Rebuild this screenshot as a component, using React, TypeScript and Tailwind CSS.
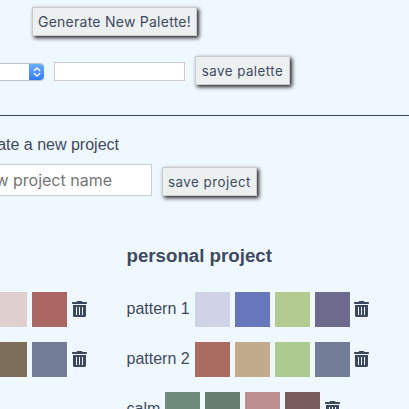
import React from "react";

const helvetica = "font-['Liberation_Sans',Arial,sans-serif]";

function ShadowButton({ children, className }: { children: React.ReactNode; className: string }) {
  return (
    <button
      className={`h-[29px] shrink-0 whitespace-nowrap border border-[#ccc] bg-[#ecf0f1] text-center font-['Inter',sans-serif] text-[#3e4a60] shadow-[2px_2px_4px_#222] ${className}`}
    >
      {children}
    </button>
  );
}

function Trash({ className }: { className: string }) {
  return (
    <svg className={`mt-[9px] h-4 w-[15px] shrink-0 ${className}`} viewBox="0 0 15 16" fill="#3b475e">
      <path d="M5.2 0h4.6l.8 1h3.7c.4 0 .7.3.7.7v.6c0 .4-.3.7-.7.7H.7C.3 3 0 2.700 0 2.300v-.6C0 1.300.3 1 .7 1h3.700z" />
      <path
        fillRule="evenodd"
        d="M1 4h13v10.500c0 .9-.6 1.500-1.500 1.500h-10C1.600 16 1 15.400 1 14.500zM4 6v8h1V6zM7 6v8h1V6zM10 6v8h1V6z"
      />
    </svg>
  );
}

function Palette({ name, width, colors, gap }: { name?: string; width?: string; colors: string[]; gap: string }) {
  return (
    <div className="flex h-[35px]">
      {name && <span className={`shrink-0 whitespace-nowrap pt-[5px] leading-6 ${width}`}>{name}</span>}
      <div className="flex shrink-0 gap-[5px]">
        {colors.map((color, i) => (
          <div key={i} className={`h-[35px] w-[35px] ${color}`} />
        ))}
      </div>
      <Trash className={gap} />
    </div>
  );
}

export default function App() {
  return (
    <main className={`h-[409px] w-[409px] overflow-hidden bg-[#f0f8ff] text-base text-[#3e4a60] ${helvetica}`}>
      <section className="h-[116px] border-b border-[#36435a] pt-[7px]">
        <ShadowButton className="ml-8 block w-[165px] text-[14px] tracking-[0.25px]">Generate New Palette!</ShadowButton>
        <div className="mt-5 flex">
          <div className="mt-[7px] flex h-[18px] w-11 justify-end overflow-hidden rounded-r-[4px] border-y border-[#c2c5c9] bg-white">
            <div className="-my-px flex h-[18px] w-[15px] items-center justify-center rounded-r-[4px] bg-linear-to-b from-[#70aefb] to-[#3378f7]">
              <svg className="h-[10px] w-2" viewBox="0 0 8 10" fill="none" stroke="white" strokeWidth="1.3" strokeLinecap="round" strokeLinejoin="round">
                <path d="M1.300 3.500 4 1l2.700 2.500M1.300 6.500 4 9l2.700-2.500" />
              </svg>
            </div>
          </div>
          <input className="ml-[10px] mt-[6px] h-[19px] w-[131px] border border-[#ccc] bg-white" />
          <ShadowButton className="ml-[10px] w-[95px] pt-[2px] text-[13.3px] tracking-[0.5px]">save palette</ShadowButton>
        </div>
      </section>
      <section className="pt-[17px]">
        <h3 className="flex w-[119px] justify-end overflow-hidden whitespace-nowrap leading-6">Create a new project</h3>
        <div className="mt-[7px] flex">
          <div className="flex h-8 w-[152px] justify-end overflow-hidden whitespace-nowrap border border-l-0 border-[#ccc] bg-white pr-[39px] font-['Inter',sans-serif] text-base leading-[30px] text-[#757575]">
            new project name
          </div>
          <ShadowButton className="ml-[10px] mt-[3px] w-[95px] pt-[2px] text-[13.3px] tracking-[0.5px]">save project</ShadowButton>
        </div>
      </section>
      <section className="mt-[48px] flex">
        <div className="flex w-[126.5px] shrink-0 flex-col gap-[15px] pt-12">
          <div className="-ml-2">
            <Palette gap="ml-[5px]" colors={["bg-[#dfcfcf]", "bg-[#aa6662]"]} />
          </div>
          <div className="-ml-2">
            <Palette gap="ml-[5px]" colors={["bg-[#7c6e5a]", "bg-[#727d98]"]} />
          </div>
        </div>
        <div className="shrink-0">
          <h2 className="h-12 text-[18.7px] font-bold leading-6">personal project</h2>
          <div className="flex flex-col gap-[15px]">
            <Palette name="pattern 1" width="w-[68.5px]" gap="ml-1" colors={["bg-[#d0d2e6]", "bg-[#6876bb]", "bg-[#b1cb90]", "bg-[#6d6b8d]"]} />
            <Palette name="pattern 2" width="w-[68.5px]" gap="ml-1" colors={["bg-[#a96c60]", "bg-[#c2aa8d]", "bg-[#accb91]", "bg-[#727d98]"]} />
            <Palette name="calm" width="w-[38.5px]" gap="ml-[5px]" colors={["bg-[#6d8a7b]", "bg-[#657e70]", "bg-[#bd8f8f]", "bg-[#785b5c]"]} />
          </div>
        </div>
      </section>
    </main>
  );
}
